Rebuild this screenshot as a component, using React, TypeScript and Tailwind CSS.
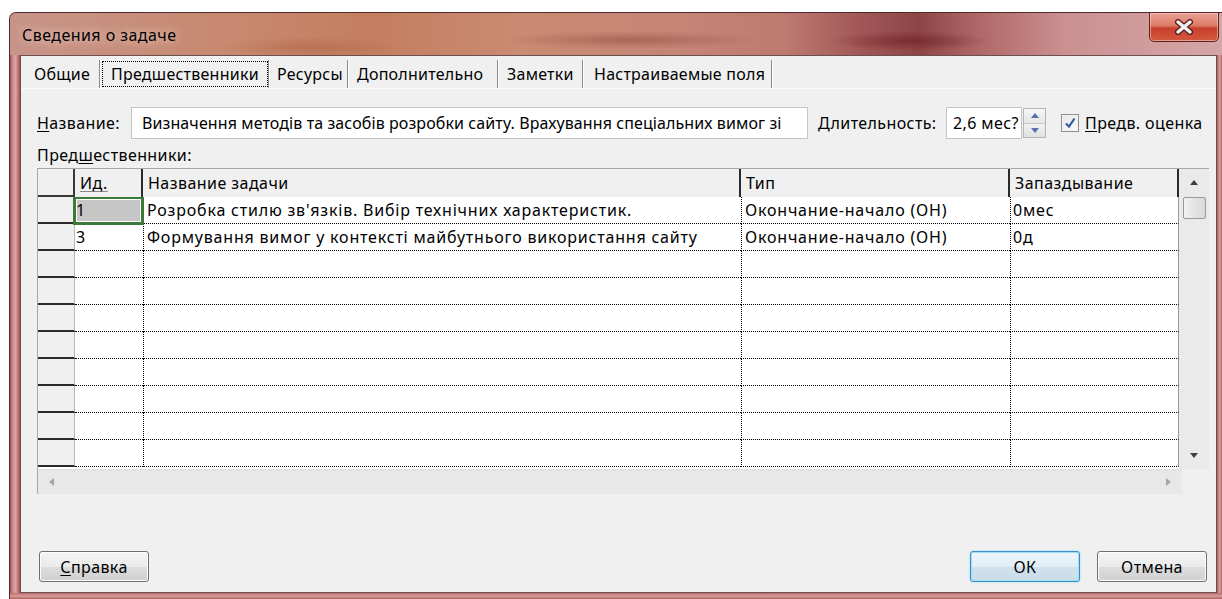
type Tab = { label: string; width: string; pad: string; active?: boolean };

const TABS: Tab[] = [
  { label: "Общие", width: "w-[70px]", pad: "pl-[4px]" },
  { label: "Предшественники", width: "w-[169px]", pad: "pl-[10px]", active: true },
  { label: "Ресурсы", width: "w-[79px]", pad: "pl-[8px]" },
  { label: "Дополнительно", width: "w-[150px]", pad: "pl-[9px]" },
  { label: "Заметки", width: "w-[85px]", pad: "pl-[9px]" },
  { label: "Настраиваемые поля", width: "w-[189px]", pad: "pl-[11px]" },
];

type Row = { id: string; name: string; type: string; lag: string };

const ROWS: Row[] = [
  {
    id: "1",
    name: "Розробка стилю зв'язків. Вибір технічних характеристик.",
    type: "Окончание-начало (ОН)",
    lag: "0мес",
  },
  {
    id: "3",
    name: "Формування вимог у контексті майбутнього використання сайту",
    type: "Окончание-начало (ОН)",
    lag: "0д",
  },
  ...Array.from({ length: 8 }, () => ({ id: "", name: "", type: "", lag: "" })),
];

const COLS = [
  { key: "id", label: "Ид.", width: "w-[68px]" },
  { key: "name", label: "Название задачи", width: "w-[598px]" },
  { key: "type", label: "Тип", width: "w-[269px]" },
  { key: "lag", label: "Запаздывание", width: "w-[169px]" },
] as const;

function Arrow({ dir, color }: { dir: "up" | "down" | "left" | "right"; color: string }) {
  const pts = {
    up: "0,5 4,0 8,5",
    down: "0,0 8,0 4,5",
    left: "5,0 5,8 0,4",
    right: "0,0 5,4 0,8",
  }[dir];
  const vertical = dir === "up" || dir === "down";
  return (
    <svg
      width={vertical ? 8 : 5}
      height={vertical ? 5 : 8}
      viewBox={vertical ? "0 0 8 5" : "0 0 5 8"}
    >
      <polygon points={pts} fill={color} />
    </svg>
  );
}

function WinButton({ children, primary }: { children: React.ReactNode; primary?: boolean }) {
  return (
    <button
      className={
        "h-[31px] w-[110px] rounded-[3px] border text-[16px] tracking-[0.4px] text-black " +
        (primary
          ? "border-[#3c8fc6] bg-[linear-gradient(180deg,#eef6fb_0%,#e2eef6_50%,#cfe1ec_51%,#c9dde9_100%)] shadow-[inset_0_0_0_1px_#9fe0f8,0_0_2px_#7fd0f5]"
          : "border-[#707070] bg-[linear-gradient(180deg,#f4f4f4_0%,#ebebeb_50%,#dddddd_51%,#d0d0d0_100%)] shadow-[inset_0_0_0_1px_#fcfcfc]")
      }
    >
      {children}
    </button>
  );
}

export default function App() {
  return (
    <div className="w-[1222px] h-[599px] overflow-hidden bg-white pt-[12px] pl-[9px] font-['Noto_Sans','Open_Sans',sans-serif] text-black">
      <div className="flex h-[587px] w-[1213px] flex-col rounded-tl-[7px] border-l border-t border-[#4a2a2a] bg-[#c27c7c]">
        {/* caption */}
        <div className="flex h-[42px] items-start rounded-tl-[6px] bg-[radial-gradient(ellipse_80px_10px_at_900px_28px,rgba(100,25,25,0.55),transparent),radial-gradient(ellipse_130px_9px_at_620px_27px,rgba(110,45,35,0.35),transparent),radial-gradient(ellipse_90px_10px_at_300px_34px,rgba(160,80,50,0.35),transparent),linear-gradient(90deg,#c8948a_0%,#c7896f_18%,#c47e5f_30%,#c98b72_42%,#c58577_55%,#bd7a70_64%,#a25858_70%,#8e4545_75%,#b06868_80%,#cb9090_87%,#d5a6a6_100%)]">
          <div className="pl-[12px] pt-[11px] text-[16px] leading-[22px] tracking-[0.45px] [text-shadow:0_0_10px_rgba(255,235,225,0.9)]">
            Сведения о задаче
          </div>
          <button className="ml-auto mr-[3px] -mt-px flex h-[30px] w-[70px] items-center justify-center rounded-b-[5px] border border-[#5a2420] bg-[linear-gradient(180deg,#e9a395_0%,#dc7a66_45%,#c8402c_55%,#d25a3e_100%)] shadow-[inset_0_0_0_1px_rgba(255,220,210,0.5)]">
            <svg width="22" height="16" viewBox="0 0 22 16">
              <path d="M5 3 L17 13 M17 3 L5 13" stroke="#5a1e1a" strokeWidth="6" strokeLinecap="round" />
              <path d="M5 3 L17 13 M17 3 L5 13" stroke="#f4f0f0" strokeWidth="3.5" strokeLinecap="round" />
            </svg>
          </button>
        </div>

        <div className="flex min-h-0 flex-1">
          {/* left frame */}
          <div className="w-[10px] bg-[linear-gradient(90deg,#a95050_0%,#cf8e8e_30%,#dba4a4_55%,#c47878_80%,#9c4a4a_100%)]" />

          {/* client area */}
          <div className="flex w-[1197px] flex-col border border-[#6a5050] bg-[#f0f0f0] text-[16px] tracking-[0.4px]">
            {/* tab strip */}
            <div className="mt-[4px] flex h-[28px] pl-[9px] tracking-[0.25px]">
              {TABS.map((t) => (
                <div
                  key={t.label}
                  className={
                    "flex h-[28px] items-center border-r border-[#8a8a8a] shadow-[1px_0_0_#ffffff] " +
                    t.width +
                    " " +
                    t.pad
                  }
                >
                  {t.active ? (
                    <span className="-ml-[8px] flex h-[26px] w-[166px] items-center border border-dotted border-black pl-[8px] leading-none">
                      {t.label}
                    </span>
                  ) : (
                    <span className="leading-none">{t.label}</span>
                  )}
                </div>
              ))}
            </div>

            {/* tab page */}
            <div className="flex flex-1 flex-col border-t border-[#fbfbfb]">
              <div className="mt-[18px] flex h-[32px] items-center pl-[16px]">
                <span className="w-[94px]">
                  <span className="underline underline-offset-2">Н</span>азвание:
                </span>
                <div className="flex h-[32px] w-[677px] items-center overflow-hidden whitespace-nowrap border border-[#c5c5c5] bg-white pl-[10px] tracking-[0.1px]">
                  Визначення методів та засобів розробки сайту. Врахування спеціальних вимог зі
                </div>
                <span className="ml-[10px] w-[128px]">
                  <span className="underline underline-offset-2">Д</span>лительность:
                </span>
                <div className="flex h-[32px] w-[76px] items-center overflow-hidden whitespace-nowrap border border-[#c5c5c5] bg-white pl-[6px]">
                  2,6 мес?
                </div>
                <div className="ml-px flex h-[30px] w-[23px] flex-col border border-[#b5b5b5] bg-[#e9e9e9]">
                  <div className="flex flex-1 items-center justify-center border-b border-[#c8c8c8] bg-[linear-gradient(180deg,#f7f7f7,#e4e4e4)]">
                    <Arrow dir="up" color="#5571a8" />
                  </div>
                  <div className="flex flex-1 items-center justify-center bg-[linear-gradient(180deg,#f2f2f2,#e0e0e0)]">
                    <Arrow dir="down" color="#5571a8" />
                  </div>
                </div>
                <div className="ml-[15px] flex h-[18px] w-[18px] items-center justify-center border border-[#8f8f8f] bg-[linear-gradient(135deg,#e6e6e6,#fbfbfb)] shadow-[inset_0_0_0_1px_#f4f4f4]">
                  <svg width="12" height="12" viewBox="0 0 12 12">
                    <path d="M2 6.5 L5 9.5 L10.5 1.5" fill="none" stroke="#3a57a0" strokeWidth="2.2" />
                  </svg>
                </div>
                <span className="ml-[6px]">
                  <span className="underline underline-offset-2">П</span>редв. оценка
                </span>
              </div>

              <div className="mt-[6px] h-[20px] pl-[16px] leading-[20px]">
                Пред<span className="underline underline-offset-2">ш</span>ественники:
              </div>

              {/* predecessors grid */}
              <div className="ml-[16px] mt-[3px] w-[1172px] border-l border-t border-[#a8a8a8]">
                <div className="flex h-[300px]">
                  <div className="w-[1141px] overflow-hidden">
                    {/* header */}
                    <div className="flex h-[28px] tracking-[0.45px]">
                      <div className="w-[37px] border-b-2 border-r-2 border-[#3a3a3a]" />
                      {COLS.map((c) => (
                        <div
                          key={c.key}
                          className={
                            "flex items-end border-r-2 border-[#2a2a2a] pb-[2px] pl-[5px] " + c.width
                          }
                        >
                          {c.key === "id" ? (
                            <span className="underline decoration-[#888] underline-offset-2">{c.label}</span>
                          ) : (
                            c.label
                          )}
                        </div>
                      ))}
                    </div>
                    {/* body */}
                    <div className="h-[272px] overflow-hidden bg-white tracking-[0.8px]">
                      {ROWS.map((r, i) => (
                        <div key={i} className="flex h-[27px]">
                          <div className="w-[37px] border-b-2 border-r border-b-[#2a2a2a] border-r-[#b8b8b8] bg-[#f0f0f0]" />
                          <div className="relative flex w-[68px] items-center border-b border-dotted border-b-black pl-[1px]">
                            {i === 0 && (
                              <div className="absolute -left-[2px] -top-[1px] -right-[1px] -bottom-[2px] border-[3px] border-[#3c7a3c] bg-[#c6c6c6] shadow-[inset_0_0_0_1px_#ffffff]" />
                            )}
                            <span className="relative">{r.id}</span>
                          </div>
                          <div className="flex w-[598px] items-center overflow-hidden whitespace-nowrap border-b border-l border-dotted border-black pl-[3px]">
                            {r.name}
                          </div>
                          <div className="flex w-[269px] items-center border-b border-l border-dotted border-black pl-[3px]">
                            {r.type}
                          </div>
                          <div className="flex w-[169px] items-center border-b border-l border-r border-dotted border-b-black border-l-black border-r-[#9a9a9a] [border-right-style:solid] pl-[2px]">
                            {r.lag}
                          </div>
                        </div>
                      ))}
                    </div>
                  </div>
                  {/* vertical scrollbar */}
                  <div className="flex w-[30px] flex-col items-center bg-[#eaeaea]">
                    <div className="flex h-[27px] w-full items-center justify-center">
                      <Arrow dir="up" color="#404040" />
                    </div>
                    <div className="mt-px h-[22px] w-[23px] rounded-[2px] border border-[#9a9a9a] bg-[linear-gradient(90deg,#f3f3f3,#e3e3e3_50%,#d9d9d9)]" />
                    <div className="flex-1" />
                    <div className="flex h-[28px] w-full items-center justify-center">
                      <Arrow dir="down" color="#404040" />
                    </div>
                  </div>
                </div>
                {/* horizontal scrollbar */}
                <div className="flex h-[25px]">
                  <div className="flex w-[1144px] items-center justify-between border-t border-[#dedede] bg-[#e8e8e8] px-[11px]">
                    <Arrow dir="left" color="#a6a6a6" />
                    <Arrow dir="right" color="#a6a6a6" />
                  </div>
                  <div className="flex-1 bg-[#efefef]" />
                </div>
              </div>

              {/* dialog buttons */}
              <div className="mt-[57px] flex pl-[18px] pr-[9px]">
                <WinButton>
                  <span className="underline underline-offset-2">С</span>правка
                </WinButton>
                <div className="ml-auto flex gap-[17px]">
                  <WinButton primary>ОК</WinButton>
                  <WinButton>Отмена</WinButton>
                </div>
              </div>
            </div>
          </div>

          {/* right frame */}
          <div className="w-[5px] bg-[linear-gradient(90deg,#a85a5a,#d6a0a0_50%,#b46a6a)]" />
        </div>

        {/* bottom frame */}
        <div className="h-[6px] bg-[linear-gradient(180deg,#b86a6a,#d79c9c_50%,#b46262)]" />
      </div>
    </div>
  );
}
